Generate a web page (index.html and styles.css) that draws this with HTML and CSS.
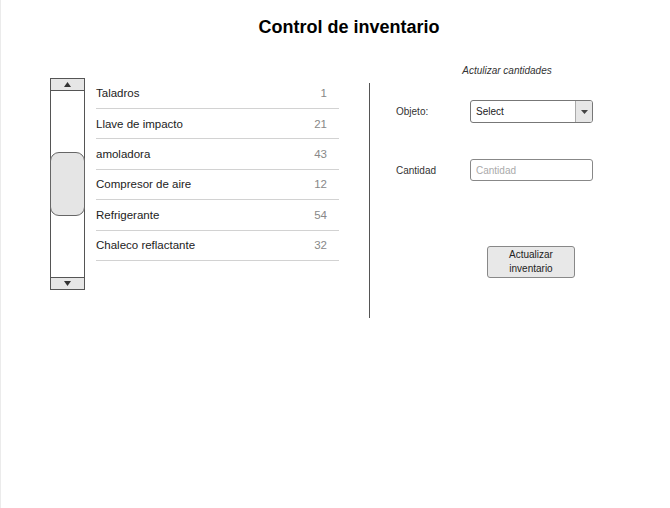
FILE: index.html
```html
<!DOCTYPE html>
<html lang="es">
<head>
<meta charset="utf-8">
<title>Control de inventario</title>
<link rel="stylesheet" href="styles.css">
</head>
<body>
<div class="page">
  <h1 class="title">Control de inventario</h1>
  <div class="main">
    <section class="inventory">
      <div class="scrollbar">
        <div class="sb-btn sb-up">
          <svg width="7" height="5" viewBox="0 0 7 5"><polygon points="0,5 7,5 3.5,0" fill="#333"/></svg>
        </div>
        <div class="sb-track"><div class="sb-thumb"></div></div>
        <div class="sb-btn sb-down">
          <svg width="7" height="5" viewBox="0 0 7 5"><polygon points="0,0 7,0 3.5,5" fill="#333"/></svg>
        </div>
      </div>
      <ul class="list">
        <li class="row"><span class="name">Taladros</span><span class="qty">1</span></li>
        <li class="row"><span class="name">Llave de impacto</span><span class="qty">21</span></li>
        <li class="row"><span class="name">amoladora</span><span class="qty">43</span></li>
        <li class="row"><span class="name">Compresor de aire</span><span class="qty">12</span></li>
        <li class="row"><span class="name">Refrigerante</span><span class="qty">54</span></li>
        <li class="row"><span class="name">Chaleco reflactante</span><span class="qty">32</span></li>
      </ul>
    </section>
    <div class="divider"></div>
    <section class="panel">
      <h2 class="panel-title">Actulizar cantidades</h2>
      <div class="form">
        <label class="label">Objeto:</label>
        <div class="select">
          <span class="select-text">Select</span>
          <span class="select-arrow">
            <svg width="7" height="4" viewBox="0 0 7 4"><polygon points="0,0 7,0 3.5,4" fill="#444"/></svg>
          </span>
        </div>
        <label class="label label-qty">Cantidad</label>
        <input class="input" type="text" placeholder="Cantidad">
      </div>
      <button class="btn" type="button">Actualizar<br>inventario</button>
    </section>
  </div>
</div>
</body>
</html>
```
FILE: styles.css
```css
html, body {
  margin: 0;
  padding: 0;
  background: #fff;
}

body {
  font-family: "Liberation Sans", Arial, sans-serif;
  color: #222;
}

.page {
  height: 508px;
  box-sizing: border-box;
  border-left: 1px solid #ebebeb;
}

.title {
  margin: 0;
  padding: 17px 0 0 27px;
  font-size: 18px;
  line-height: 21px;
  font-weight: bold;
  color: #000;
  text-align: center;
}

.main {
  display: flex;
  align-items: flex-start;
  margin-top: 22px;
  padding-left: 49px;
}

.inventory {
  display: flex;
  align-items: flex-start;
  margin-top: 18px;
}

.scrollbar {
  width: 35px;
  height: 212px;
  box-sizing: border-box;
  border: 1px solid #555;
  display: flex;
  flex-direction: column;
}

.sb-btn {
  height: 11px;
  background: #e6e6e6;
  display: flex;
  align-items: center;
  justify-content: center;
}

.sb-up {
  border-bottom: 1px solid #555;
}

.sb-down {
  border-top: 1px solid #555;
}

.sb-track {
  flex: 1;
}

.sb-thumb {
  margin: 61px -1px 0;
  height: 64px;
  box-sizing: border-box;
  border: 1px solid #666;
  border-radius: 9px;
  background: #e5e5e5;
}

.list {
  list-style: none;
  margin: 0.6px 0 0 11px;
  padding: 0;
  width: 243px;
}

.row {
  height: 30.4px;
  box-sizing: border-box;
  border-bottom: 1px solid #d2d2d2;
  display: flex;
  align-items: center;
  justify-content: space-between;
  padding-right: 12px;
  font-size: 11.5px;
}

.name {
  color: #222;
}

.qty {
  color: #888;
}

.divider {
  width: 1px;
  height: 235px;
  background: #555;
  margin: 23px 0 0 30px;
}

.panel {
  width: 274px;
  display: flex;
  flex-direction: column;
}

.panel-title {
  margin: 5px 0 0;
  font-size: 10px;
  line-height: 12px;
  font-weight: normal;
  font-style: italic;
  text-align: center;
  color: #333;
}

.form {
  display: grid;
  grid-template-columns: 74px 123px;
  grid-template-rows: 23px 22px;
  row-gap: 36px;
  align-items: center;
  margin-top: 23px;
  padding-left: 26px;
}

.label {
  font-size: 10px;
  color: #333;
}

.select {
  height: 23px;
  box-sizing: border-box;
  border: 1px solid #777;
  border-radius: 3px;
  display: flex;
  overflow: hidden;
}

.select-text {
  flex: 1;
  padding-left: 5px;
  font-size: 10px;
  line-height: 21px;
  color: #222;
}

.select-arrow {
  width: 17px;
  box-sizing: border-box;
  border-left: 1px solid #aaa;
  background: #e6e6e6;
  display: flex;
  align-items: center;
  justify-content: center;
}

.input {
  width: 123px;
  height: 22px;
  box-sizing: border-box;
  margin: 0;
  border: 1px solid #888;
  border-radius: 3px;
  padding: 0 5px;
  font-family: "Liberation Sans", Arial, sans-serif;
  font-size: 10px;
  color: #222;
  background: #fff;
  outline: none;
}

.input::placeholder {
  color: #aaa;
}

.btn {
  align-self: flex-start;
  margin: 65px 0 0 117px;
  width: 88px;
  height: 32px;
  box-sizing: border-box;
  padding: 0;
  border: 1px solid #888;
  border-radius: 3px;
  background: #e8e8e8;
  font-family: "Liberation Sans", Arial, sans-serif;
  font-size: 10px;
  line-height: 14px;
  color: #222;
  text-align: center;
}
```
